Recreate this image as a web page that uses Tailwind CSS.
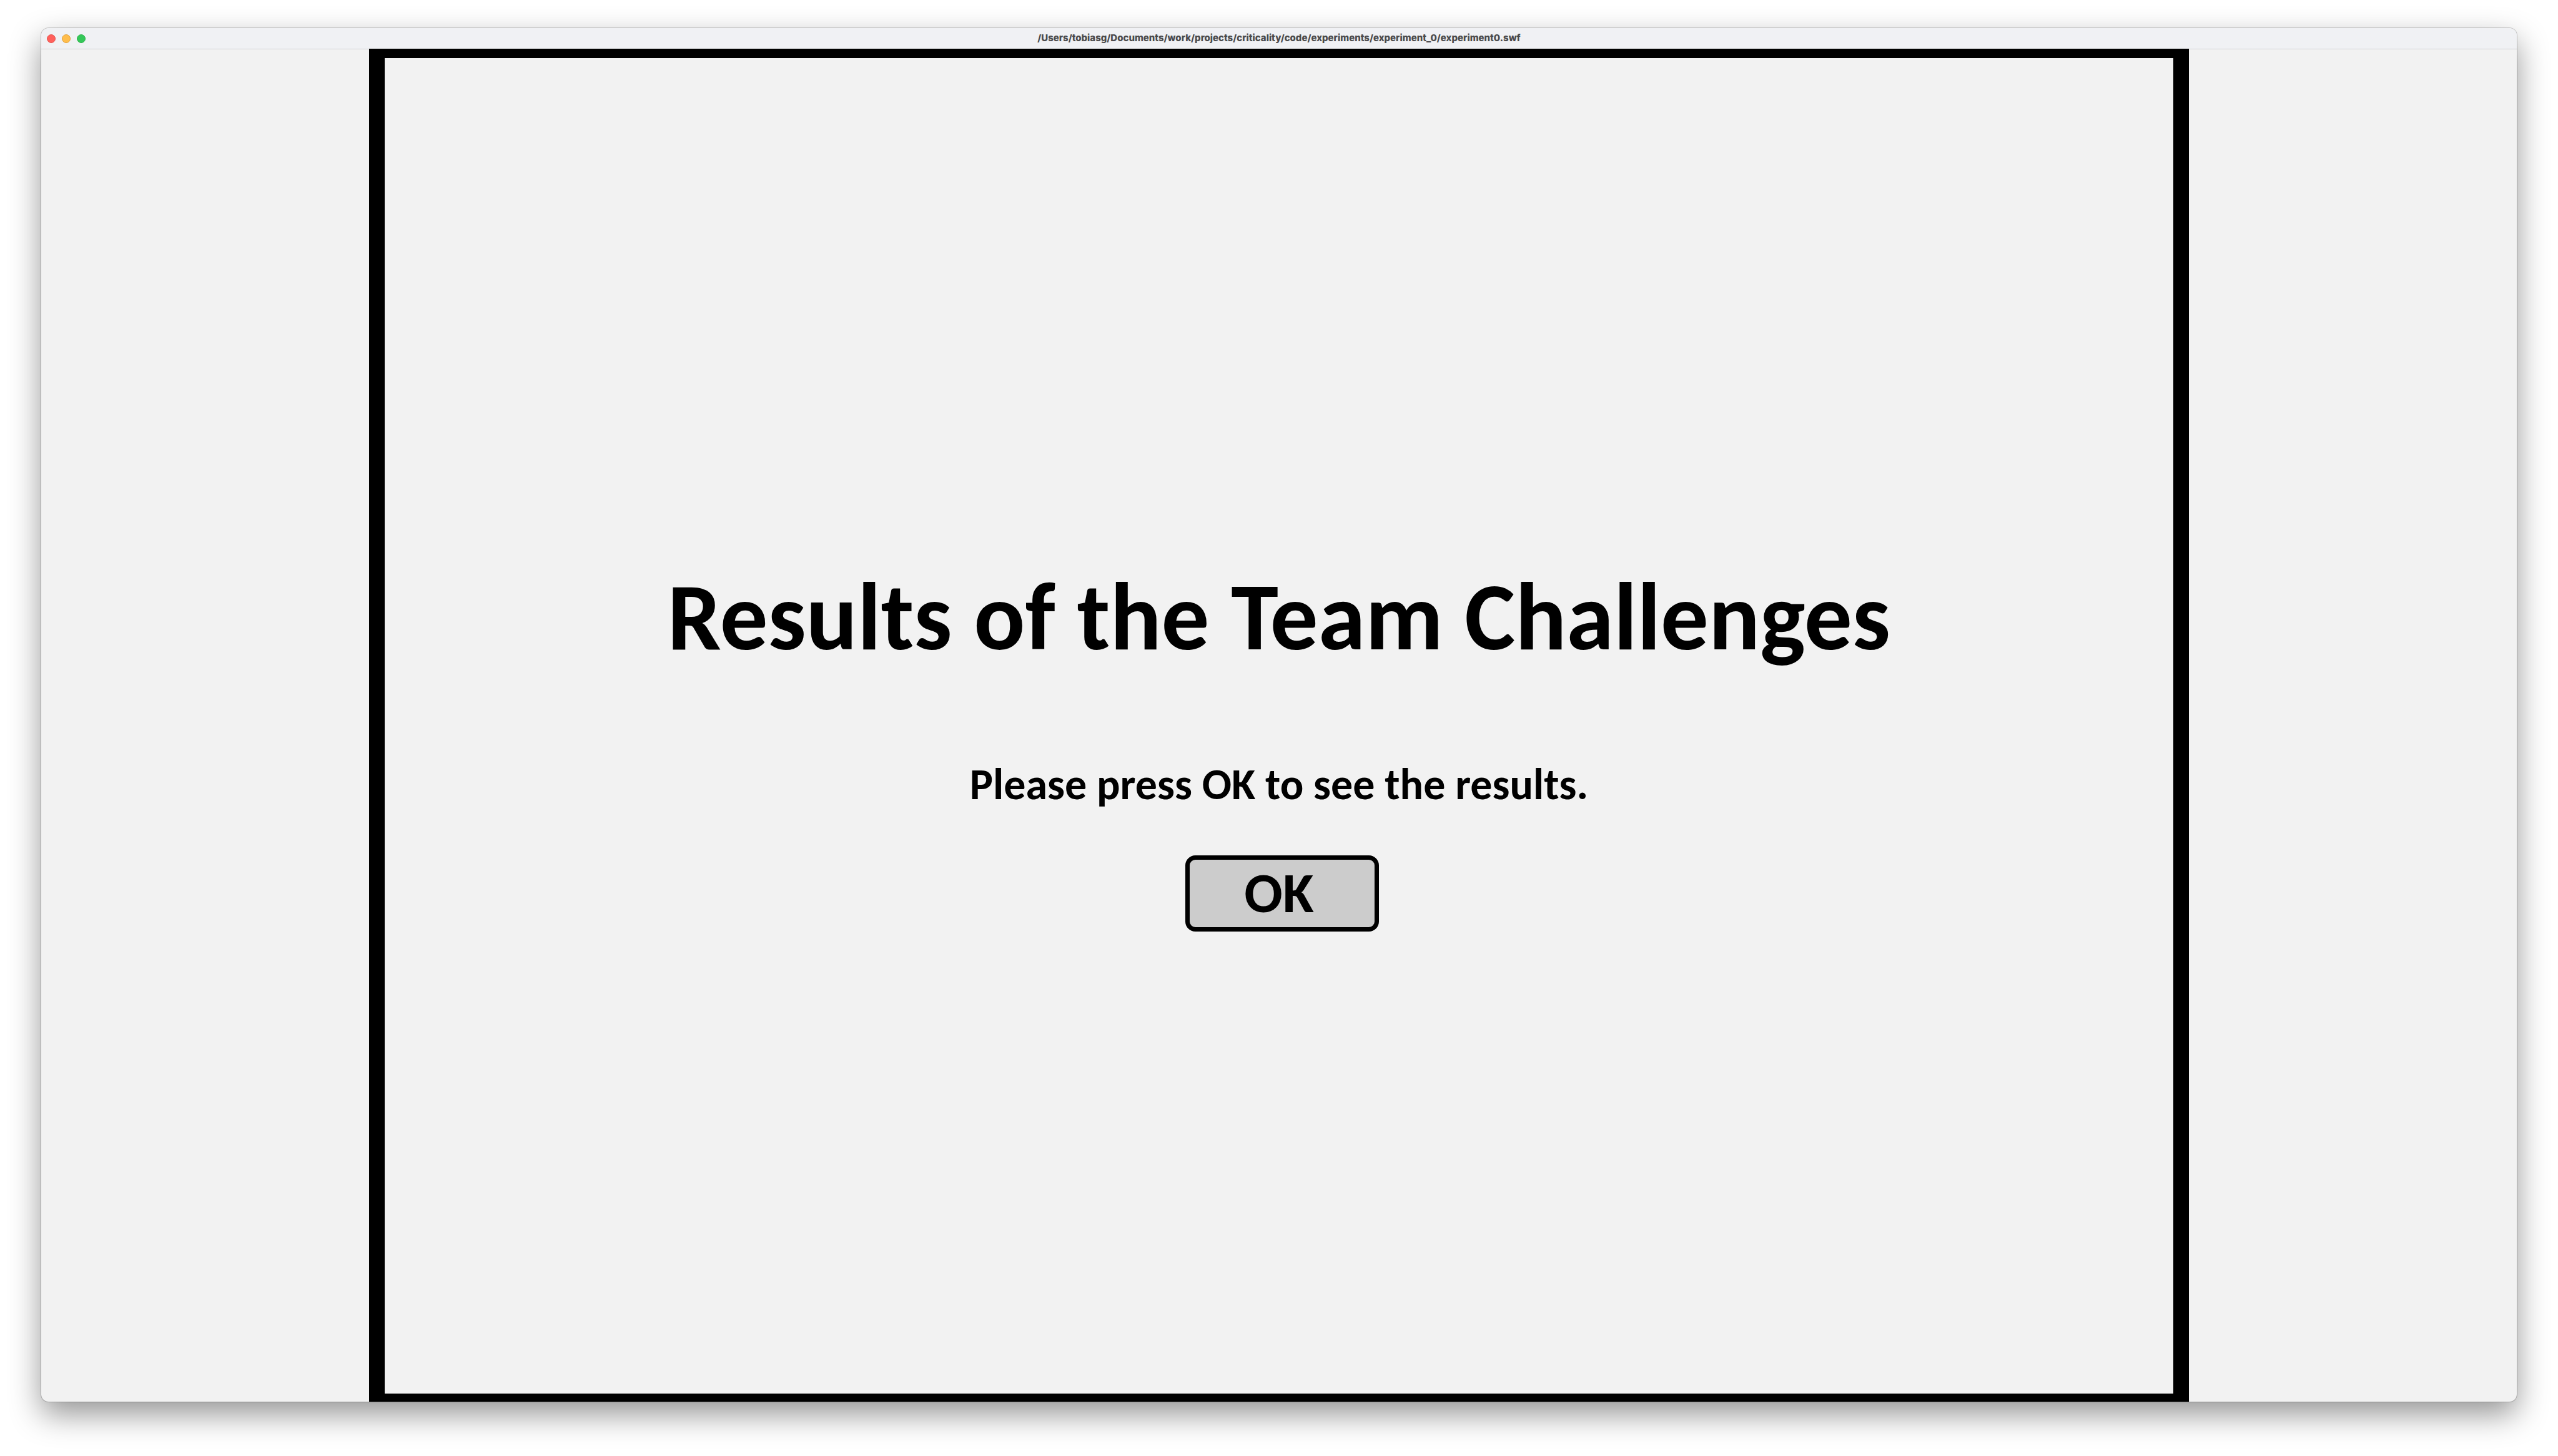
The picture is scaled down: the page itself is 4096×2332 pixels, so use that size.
<!DOCTYPE html>
<html lang="en">
<head>
<meta charset="utf-8">
<meta name="viewport" content="width=device-width, initial-scale=1">
<title>experiment0.swf</title>
<script src="https://cdn.jsdelivr.net/npm/@tailwindcss/browser@4"></script>
</head>
<body class="bg-white">
<div class="flex h-screen flex-col px-[66px] pt-[45px] pb-[87px]">
  <div class="flex flex-1 flex-col overflow-hidden rounded-xl bg-[#f2f2f2] shadow-[0_0_0_1px_rgba(0,0,0,0.2),0_20px_50px_rgba(0,0,0,0.42)]">
    <header class="grid h-[34px] shrink-0 grid-cols-[1fr_auto_1fr] items-center border-b border-[#cfcfd0] bg-[#f0f1f4] px-[9px]">
      <div class="flex gap-[10px]">
        <button type="button" aria-label="Close" class="size-[14px] rounded-full border border-[#e2544f] bg-[#ff605c]"></button>
        <button type="button" aria-label="Minimize" class="size-[14px] rounded-full border border-[#dfa03e] bg-[#ffbd4c]"></button>
        <button type="button" aria-label="Zoom" class="size-[14px] rounded-full border border-[#2eb34b] bg-[#34c759]"></button>
      </div>
      <h2 class="pb-[2px] font-['Inter',sans-serif] text-[15px] leading-[20px] font-extrabold text-[#4a4a4b]">/Users/tobiasg/Documents/work/projects/criticality/code/experiments/experiment_0/experiment0.swf</h2>
    </header>
    <main class="-mt-px flex flex-1 flex-col px-[525px]">
      <section class="flex flex-1 flex-col items-center justify-center border-x-[25px] border-t-[15px] border-b-[13px] border-black pt-[74px] font-['Calibri','Carlito','Lato',sans-serif] font-bold text-black">
        <h1 class="text-[153px] leading-[160px] whitespace-nowrap">Results of the Team Challenges</h1>
        <p class="mt-[148px] text-[70px] leading-[80px]">Please press OK to see the results.</p>
        <button type="button" class="mt-[74px] ml-[10px] h-[122px] w-[310px] rounded-2xl border-[7px] border-black bg-[#cccccc] pr-[10px] pb-[2px] text-[91px] leading-[100px]">OK</button>
      </section>
    </main>
  </div>
</div>
</body>
</html>
